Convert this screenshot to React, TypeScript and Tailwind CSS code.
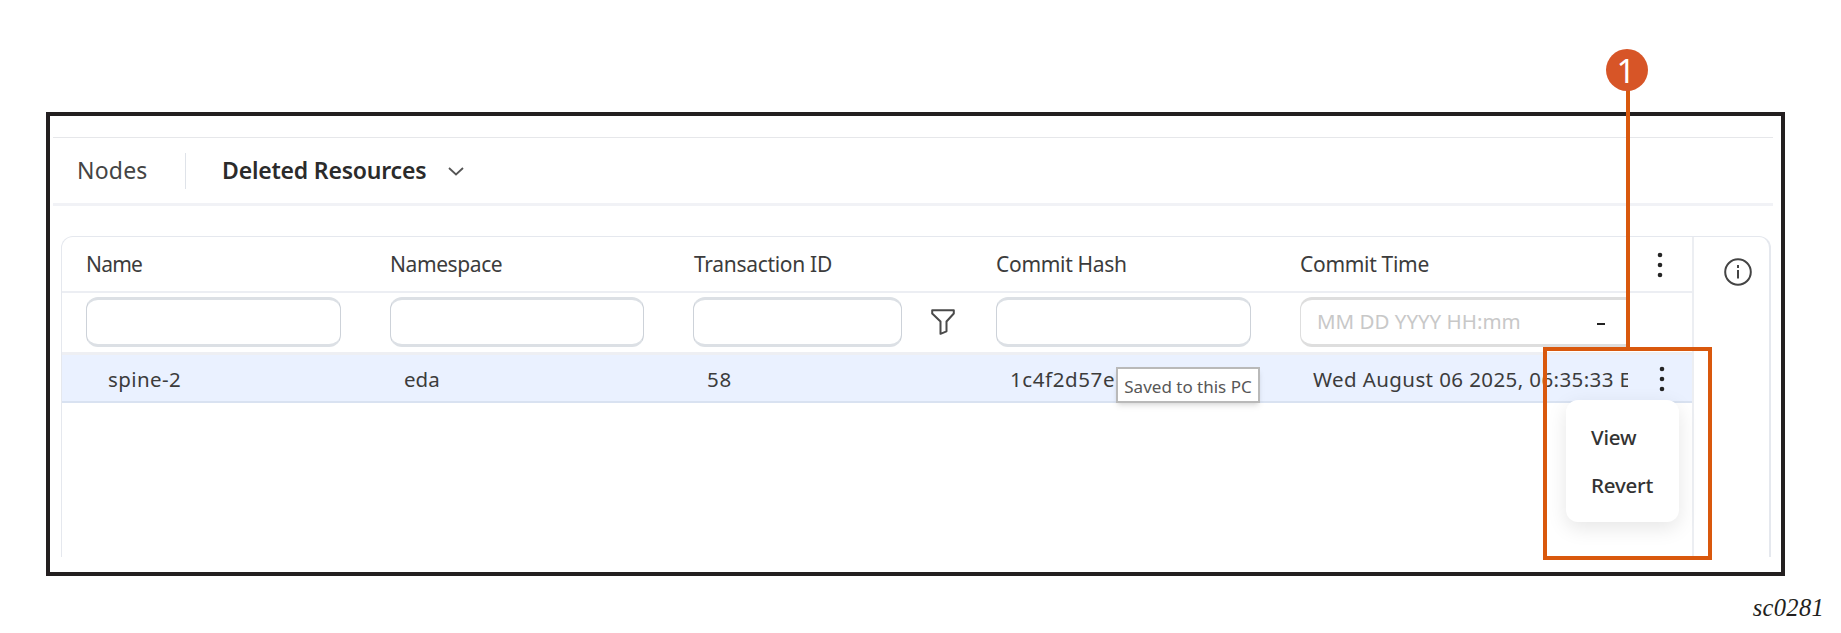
import type { ReactNode } from "react";

const GRID = "grid grid-cols-[304px_303px_303px_304px_1fr] items-center pl-6";
const INPUT =
  "h-[50px] rounded-[12px] border-x-[1.5px] border-y-[3px] border-x-[#cdd2d9] border-y-[#dce0e5]";

function Kebab({ className }: { className?: string }) {
  return (
    <svg viewBox="0 0 6 26" className={`h-[26px] w-[6px] shrink-0 fill-[#262626] ${className ?? ""}`}>
      <circle cx="3" cy="3" r="2.3" />
      <circle cx="3" cy="13" r="2.3" />
      <circle cx="3" cy="23" r="2.3" />
    </svg>
  );
}

function Toolbar() {
  return (
    <div className="mt-[21px] mr-[8px] ml-[3px] flex h-[69px] items-center border-t border-b-[3px] border-t-[#e6e7ea] border-b-[#f1f2f6] pl-[24px] text-[23px] leading-none text-[#444]">
      <span className="w-[108px] tracking-[0.2px]">Nodes</span>
      <span className="h-9 w-px bg-[#dfe3e9]" />
      <span className="ml-[36px] w-[226px] font-semibold tracking-[-0.2px] whitespace-nowrap text-[#2b2b2b]">
        Deleted Resources
      </span>
      <svg viewBox="0 0 16 9" className="mt-[2px] h-[9px] w-[16px] fill-none stroke-[#555] stroke-[1.8]">
        <path d="M1 1l7 6.5L15 1" />
      </svg>
    </div>
  );
}

function HeaderRow() {
  return (
    <div className={`${GRID} h-[56px] border-b-2 border-[#eceef3] pt-px text-[21px] leading-none whitespace-nowrap text-[#3c3c3c]`}>
      <span className="tracking-[-0.8px]">Name</span>
      <span className="tracking-[-0.4px]">Namespace</span>
      <span className="pl-px tracking-[-0.3px]">Transaction ID</span>
      <span className="tracking-[-0.3px]">Commit Hash</span>
      <div className="flex items-center justify-between pr-[29px]">
        <span className="tracking-[-0.3px]">Commit Time</span>
        <Kebab />
      </div>
    </div>
  );
}

function FilterRow() {
  return (
    <div className={`${GRID} h-[62px] border-b-[3px] border-[#eeeff3] pb-[2px]`}>
      <div className={`${INPUT} w-[255px]`} />
      <div className={`${INPUT} w-[254px]`} />
      <div className="flex items-center">
        <div className={`${INPUT} w-[209px]`} />
        <svg viewBox="0 0 24 26" className="ml-[29px] h-[26px] w-[24px] fill-none stroke-[#4a4a4a] stroke-2">
          <path d="M1.2 1.3h21.6v3.2l-7.3 8v9.8l-6 2.5V12.5l-8.3-8z" strokeLinejoin="round" />
        </svg>
      </div>
      <div className={`${INPUT} w-[255px]`} />
      <div className="flex h-[50px] w-[328px] items-center rounded-l-[12px] border-y-[3px] border-l-[1.5px] border-[#dedede] pl-[16px] text-[20.5px] leading-none">
        <span className="w-[280px] whitespace-nowrap text-[#c8c8c8]">MM DD YYYY HH:mm</span>
        <span className="mt-1 h-[2px] w-[8px] bg-[#222]" />
      </div>
    </div>
  );
}

function DataRow() {
  return (
    <div className={`${GRID} h-[48px] border-b-2 border-[#d9e2f1] bg-[#eaf1ff] pt-[2px] text-[20.5px] leading-none whitespace-nowrap text-[#3c3c3c]`}>
      <span className="pl-[22px] tracking-[0.4px]">spine-2</span>
      <span className="pl-[14px]">eda</span>
      <span className="pl-[14px] tracking-[0.8px]">58</span>
      <span className="pl-[14px] tracking-[0.6px]">1c4f2d57e</span>
      <div className="flex items-center">
        <div className="h-[30px] w-[328px] overflow-hidden pl-[13px] leading-[30px] tracking-[0.4px]">
          Wed August 06 2025, 06:35:33 E
        </div>
        <Kebab className="ml-[31px]" />
      </div>
    </div>
  );
}

function MenuItem({ children }: { children: ReactNode }) {
  return (
    <div className="flex h-[48px] items-center pl-[25px] text-[20.5px] leading-none font-medium tracking-[-0.2px] text-[#333]">
      {children}
    </div>
  );
}

export default function App() {
  return (
    <main className="relative h-[633px] w-[1841px] overflow-hidden bg-white pt-[112px] pl-[46px] font-['Noto_Sans',sans-serif]">
      <section className="h-[464px] w-[1739px] border-4 border-[#231f20]">
        <Toolbar />
        <div className="mt-[30px] ml-[11px] flex h-[321px] w-[1710px] rounded-t-[12px] border-x border-t border-r-2 border-[#e5e8ee]">
          <div className="w-[1632px] border-r-2 border-[#eceef2]">
            <HeaderRow />
            <FilterRow />
            <DataRow />
          </div>
          <svg viewBox="0 0 28 28" className="mt-[21px] ml-[30px] h-[28px] w-[28px] fill-none stroke-[#444] stroke-2">
            <circle cx="14" cy="14" r="12.8" />
            <path d="M14 12v8.5M14 7v3" />
          </svg>
        </div>
      </section>
      <div className="mt-[16px] pr-[17px] text-right font-['Liberation_Serif',serif] text-[24.5px] leading-[32px] tracking-[0.3px] text-[#231f20] italic">
        sc0281
      </div>

      {/* tooltip */}
      <div className="absolute top-[367px] left-[1116px] flex h-[36px] w-[144px] items-center justify-center border-2 border-[#b9b9b9] bg-white pt-[2px] text-[17px] leading-none whitespace-nowrap text-[#575757] shadow-md">
        Saved to this PC
      </div>

      {/* row actions menu */}
      <div className="absolute top-[400px] left-[1566px] h-[122px] w-[113px] rounded-[12px] bg-white pt-[13px] shadow-[0_6px_20px_rgba(0,0,0,0.1)]">
        <MenuItem>View</MenuItem>
        <MenuItem>Revert</MenuItem>
      </div>

      {/* callout 1 */}
      <div className="absolute top-[347px] left-[1543px] h-[213px] w-[169px] border-4 border-[#d9580d]" />
      <div className="absolute top-[88px] left-[1626px] h-[260px] w-[4px] bg-[#d9580d]" />
      <div className="absolute top-[49px] left-[1606px] flex h-[42px] w-[42px] items-center justify-center rounded-full bg-[#d75527] pr-[2px] text-[33px] leading-none text-white">
        1
      </div>
    </main>
  );
}
